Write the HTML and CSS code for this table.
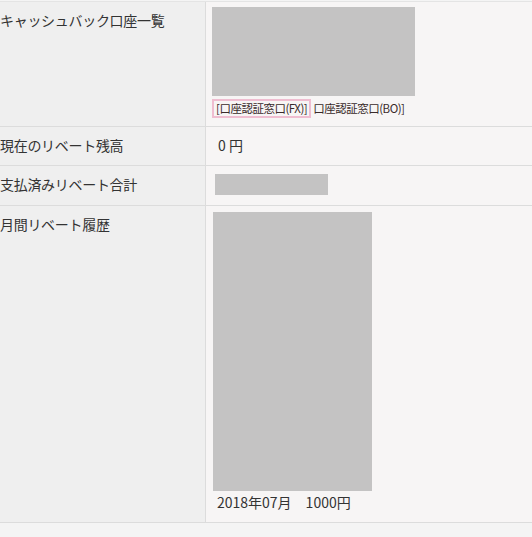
FILE: index.html
```html
<!DOCTYPE html>
<html lang="ja">
<head>
  <meta charset="UTF-8" />
  <title>リベート情報</title>
  <meta name="viewport" content="width=device-width, initial-scale=1.0">
  <link rel="stylesheet" href="styles.css">
</head>
<body>
  <div class="info-table">
    <div class="info-row">
      <div class="info-label">キャッシュバック口座一覧</div>
      <div class="info-value first">
        <div class="placeholder banner"></div>
        <div class="account-links">
          <span class="account-link active">[口座認証窓口(FX)]</span>
          <span class="account-link">口座認証窓口(BO)]</span>
        </div>
      </div>
    </div>
    <div class="info-row balance">
      <div class="info-label">現在のリベート残高</div>
      <div class="info-value amount">0 円</div>
    </div>
    <div class="info-row paid">
      <div class="info-label">支払済みリベート合計</div>
      <div class="info-value">
        <div class="placeholder total"></div>
      </div>
    </div>
    <div class="info-row history">
      <div class="info-label">月間リベート履歴</div>
      <div class="info-value">
        <div class="placeholder chart"></div>
        <div class="history-text">2018年07月　1000円</div>
      </div>
    </div>
  </div>
</body>
</html>
```

FILE: styles.css
```css
body {
  margin: 0;
  padding-top: 1px;
  background: #f4f4f4;
  font-family: "Noto Sans CJK JP", "Noto Sans", sans-serif;
  font-size: 14px;
  color: #333;
}

.info-table {
  border-top: 1px solid #e4e4e4;
}

.info-row {
  display: grid;
  grid-template-columns: 206px 1fr;
  border-bottom: 1px solid #dcdcdc;
}

.info-label {
  background: #efefef;
  border-right: 1px solid #dcdcdc;
  padding-top: 8px;
  line-height: 20px;
  letter-spacing: -0.3px;
}

.info-value {
  background: #f7f5f5;
  padding: 5px 6px 0;
}

.info-value.first {
  height: 119px;
}

.placeholder {
  background: #c4c3c3;
}

.banner {
  width: 203px;
  height: 89px;
}

.account-links {
  margin-top: 3px;
  display: flex;
  font-size: 11.5px;
  line-height: 15px;
  color: #3a2b2b;
  letter-spacing: -0.5px;
}

.account-link {
  padding: 0 2px 0 2px;
  border: 2px solid transparent;
}

.account-link + .account-link {
  padding-left: 0;
}

.account-link.active {
  border-color: #efbdd0;
}

.balance {
  height: 38px;
}

.amount {
  padding: 8px 12px 0;
  line-height: 20px;
}

.paid {
  height: 39px;
}

.paid .info-value {
  padding: 8px 9px 0;
}

.total {
  width: 113px;
  height: 21px;
}

.history {
  height: 316px;
}

.history .info-value {
  padding: 6px 7px 0;
}

.chart {
  width: 159px;
  height: 279px;
}

.history-text {
  padding: 1px 0 0 4px;
  line-height: 20px;
}
```
